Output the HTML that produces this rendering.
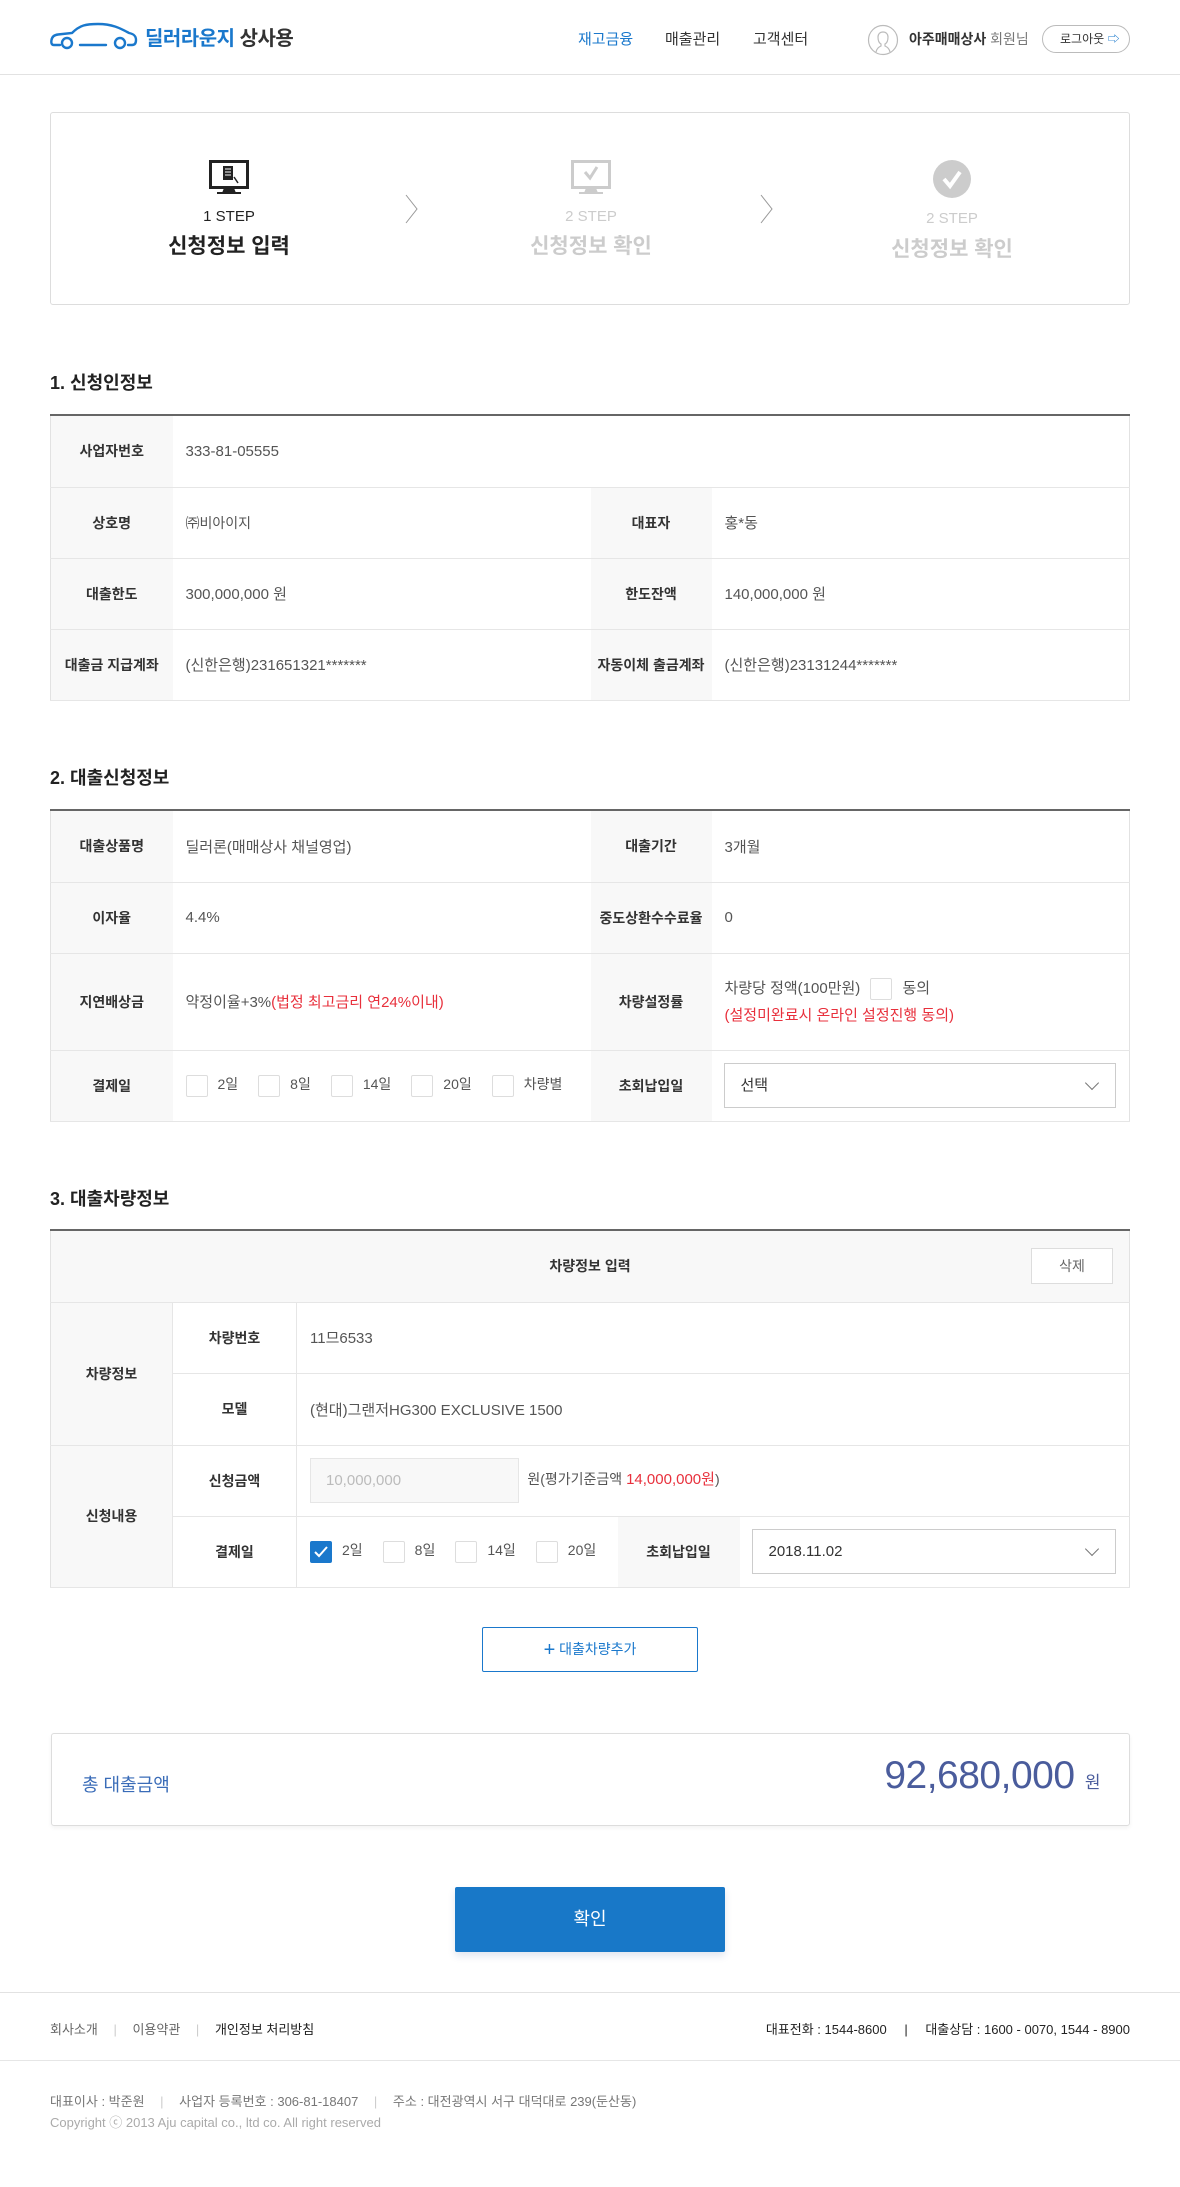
<!DOCTYPE html>
<html lang="ko"><head><meta charset="utf-8">
<style>
*{margin:0;padding:0;box-sizing:border-box}
body{width:1180px;height:2187px;background:#fff;font-family:"Liberation Sans","Noto Sans CJK KR",sans-serif;color:#333;position:relative;overflow:hidden}
.a{position:absolute}
.hdr{left:0;top:0;width:1180px;height:75px;border-bottom:1px solid #e2e2e2}
.nav{font-size:15px;color:#333;top:28px}
.box{border:1px solid #ddd;border-radius:3px}
.stitle{font-size:18px;font-weight:bold;color:#222;left:50px}
table{border-collapse:collapse;position:absolute;left:50px;width:1080px;border-top:2px solid #666}
td{border-bottom:1px solid #e6e6e6;font-size:15px;color:#555;padding-left:13px;vertical-align:middle}
td.l{background:#f8f8f8;font-weight:bold;color:#333;font-size:14px;text-align:center;padding:0}
table{border-left:1px solid #e2e2e2;border-right:1px solid #e2e2e2}
.red{color:#e8303c}
.cb{display:inline-block;width:22px;height:22px;border:1px solid #ddd;border-radius:2px;vertical-align:middle;margin-right:10px;background:#fff}
.ck{margin-right:20px;display:inline-block}
.sel{border:1px solid #ccc;height:45px;position:relative;font-size:15px;color:#333;line-height:43px;padding-left:16px}
.sel:after{content:"";position:absolute;right:18px;top:14px;width:9px;height:9px;border-right:1px solid #777;border-bottom:1px solid #777;transform:rotate(45deg)}
.ft{font-size:13px;color:#666}
</style></head><body>
<div class="a hdr"></div>
<svg class="a" style="left:50px;top:22px" width="88" height="28" viewBox="0 0 88 28"><g fill="none" stroke="#1a78cc" stroke-width="2.4" stroke-linecap="round"><path d="M10 23H4C1.5 23 1 21 1.5 18C2 15 4 13 8 12.5L22 11C30 3 36 2 48 2C62 2 70 6 79 11C84 12 86 14 86 18C86 21 85 23 82 23H78"/><circle cx="17" cy="21" r="5"/><circle cx="70" cy="21" r="5"/><path d="M30 23H56"/></g></svg>
<div class="a" style="left:145px;top:22px;font-size:20px;font-weight:bold;letter-spacing:-0.5px"><span style="color:#1a78cc">딜러라운지</span> <span style="color:#333">상사용</span></div>
<div class="a nav" style="left:578px;color:#1a78cc">재고금융</div>
<div class="a nav" style="left:665px">매출관리</div>
<div class="a nav" style="left:753px">고객센터</div>
<svg class="a" style="left:867px;top:24px" width="32" height="32" viewBox="0 0 32 32"><g fill="none" stroke="#bbb" stroke-width="1.2"><circle cx="16" cy="16" r="14.5"/><path d="M9 28c1-4 3-5 5-6v-2c-2-1-3-4-3-7 0-3 2-5 5-5s5 2 5 5c0 3-1 6-3 7v2c2 1 4 2 5 6"/></g></svg>
<div class="a" style="left:909px;top:29px;font-size:14px;color:#333;font-weight:bold">아주매매상사 <span style="font-weight:normal;color:#777">회원님</span></div>
<div class="a" style="left:1042px;top:25px;width:88px;height:28px;border:1px solid #bbb;border-radius:14px;font-size:12px;color:#333;line-height:26px;padding-left:17px">로그아웃 <span style="color:#1a78cc;font-size:12px">⇨</span></div>

<div class="a box" style="left:50px;top:112px;width:1080px;height:193px"></div>
<svg class="a" style="left:209px;top:160px" width="40" height="35" viewBox="0 0 40 35"><rect x="1.5" y="1.5" width="37" height="26" fill="#fff" stroke="#222" stroke-width="3"/><rect x="14" y="6" width="10" height="14" fill="#222"/><path d="M16 9h6M16 12h6M16 15h6" stroke="#fff"/><path d="M25 17l4 6" stroke="#222" stroke-width="1.5"/><path d="M15 28h10l2 5H13z" fill="#222"/><rect x="8" y="32" width="24" height="2" fill="#222"/></svg>
<div class="a" style="left:129px;top:208px;width:200px;text-align:center;font-size:15px;color:#222">1 STEP</div>
<div class="a" style="left:129px;top:230px;width:200px;text-align:center;font-size:21px;font-weight:bold;color:#222">신청정보 입력</div>
<svg class="a" style="left:404px;top:194px" width="16" height="30"><path d="M2 1l11 14L2 29" fill="none" stroke="#999" stroke-width="1"/></svg>
<svg class="a" style="left:759px;top:194px" width="16" height="30"><path d="M2 1l11 14L2 29" fill="none" stroke="#999" stroke-width="1"/></svg>
<svg class="a" style="left:571px;top:160px" width="40" height="35" viewBox="0 0 40 35"><rect x="1.5" y="1.5" width="37" height="26" fill="#fff" stroke="#ccc" stroke-width="3"/><path d="M14 12l5 6 7-11" fill="none" stroke="#ccc" stroke-width="3"/><path d="M15 28h10l2 5H13z" fill="#ccc"/><rect x="8" y="32" width="24" height="2" fill="#ccc"/></svg>
<div class="a" style="left:491px;top:208px;width:200px;text-align:center;font-size:15px;color:#ccc">2 STEP</div>
<div class="a" style="left:491px;top:230px;width:200px;text-align:center;font-size:21px;font-weight:bold;color:#ccc">신청정보 확인</div>
<svg class="a" style="left:932px;top:159px" width="40" height="40"><circle cx="20" cy="20" r="19" fill="#ccc"/><path d="M12 20l6 7 10-14" fill="none" stroke="#fff" stroke-width="4"/></svg>
<div class="a" style="left:852px;top:210px;width:200px;text-align:center;font-size:15px;color:#ccc">2 STEP</div>
<div class="a" style="left:852px;top:233px;width:200px;text-align:center;font-size:21px;font-weight:bold;color:#ccc">신청정보 확인</div>

<div class="a stitle" style="top:369px">1. 신청인정보</div>
<table style="top:414px">
<tr style="height:72px"><td class="l" style="width:122px">사업자번호</td><td colspan="3">333-81-05555</td></tr>
<tr style="height:71px"><td class="l">상호명</td><td style="width:418px;font-size:14px">㈜비아이지</td><td class="l" style="width:121px">대표자</td><td>홍*동</td></tr>
<tr style="height:71px"><td class="l">대출한도</td><td>300,000,000 원</td><td class="l">한도잔액</td><td>140,000,000 원</td></tr>
<tr style="height:71px"><td class="l">대출금 지급계좌</td><td>(신한은행)231651321*******</td><td class="l">자동이체 출금계좌</td><td>(신한은행)23131244*******</td></tr>
</table>

<div class="a stitle" style="top:764px">2. 대출신청정보</div>
<table style="top:809px">
<tr style="height:72px"><td class="l" style="width:122px">대출상품명</td><td style="width:418px">딜러론(매매상사 채널영업)</td><td class="l" style="width:121px">대출기간</td><td>3개월</td></tr>
<tr style="height:71px"><td class="l">이자율</td><td>4.4%</td><td class="l">중도상환수수료율</td><td>0</td></tr>
<tr style="height:97px"><td class="l">지연배상금</td><td>약정이율+3%<span class="red">(법정 최고금리 연24%이내)</span></td><td class="l">차량설정률</td><td style="line-height:27px">차량당 정액(100만원) <span class="cb" style="margin:0 10px 0 6px"></span>동의<br><span class="red">(설정미완료시 온라인 설정진행 동의)</span></td></tr>
<tr style="height:71px"><td class="l">결제일</td><td style="font-size:14px"><span class="ck"><span class="cb"></span>2일</span><span class="ck"><span class="cb"></span>8일</span><span class="ck"><span class="cb"></span>14일</span><span class="ck"><span class="cb"></span>20일</span><span class="ck" style="margin:0"><span class="cb"></span>차량별</span></td><td class="l">초회납입일</td><td style="padding-left:12px;padding-right:13px"><div class="sel">선택</div></td></tr>
</table>

<div class="a stitle" style="top:1185px">3. 대출차량정보</div>
<table style="top:1229px">
<tr style="height:72px;background:#f8f8f8"><td colspan="5" style="text-align:center;font-weight:bold;color:#333;font-size:14px;position:relative;padding:0">차량정보 입력<div class="a" style="right:16px;top:17px;width:82px;height:36px;background:#fff;border:1px solid #ddd;line-height:34px;font-weight:normal;color:#666">삭제</div></td></tr>
<tr style="height:71px"><td class="l" rowspan="2" style="width:122px;border-right:1px solid #e6e6e6">차량정보</td><td class="l" style="width:124px;background:#fff;border-right:1px solid #e6e6e6">차량번호</td><td colspan="3">11므6533</td></tr>
<tr style="height:72px"><td class="l" style="background:#fff;border-right:1px solid #e6e6e6">모델</td><td colspan="3">(현대)그랜저HG300 EXCLUSIVE  1500</td></tr>
<tr style="height:71px"><td class="l" rowspan="2" style="border-right:1px solid #e6e6e6">신청내용</td><td class="l" style="background:#fff;border-right:1px solid #e6e6e6">신청금액</td><td colspan="3"><span style="display:inline-block;width:209px;height:45px;background:#f8f8f8;border:1px solid #e6e6e6;color:#bbb;line-height:43px;padding-left:15px;vertical-align:middle">10,000,000</span> &nbsp;<span style="font-size:14px">원(평가기준금액 <span class="red" style="font-size:15px">14,000,000원</span>)</span></td></tr>
<tr style="height:71px"><td class="l" style="background:#fff;border-right:1px solid #e6e6e6">결제일</td><td style="width:321px;font-size:14px"><span class="ck"><span class="cb" style="background:#1a78cc;border-color:#1a78cc;position:relative"><svg style="position:absolute;left:3px;top:4px" width="14" height="12"><path d="M1 6l4 4 8-9" fill="none" stroke="#fff" stroke-width="2"/></svg></span>2일</span><span class="ck"><span class="cb"></span>8일</span><span class="ck"><span class="cb"></span>14일</span><span class="ck" style="margin:0"><span class="cb"></span>20일</span></td><td class="l" style="width:122px">초회납입일</td><td style="padding-left:12px;padding-right:13px"><div class="sel">2018.11.02</div></td></tr>
</table>

<div class="a" style="left:482px;top:1627px;width:216px;height:45px;border:1px solid #1a78cc;border-radius:2px;text-align:center;line-height:43px;font-size:14px;color:#1a78cc"><span style="font-size:20px;vertical-align:-2px">+</span> 대출차량추가</div>

<div class="a box" style="left:51px;top:1733px;width:1079px;height:93px;box-shadow:0 2px 4px rgba(0,0,0,.05)"></div>
<div class="a" style="left:82px;top:1771px;font-size:18px;color:#3a6cb8">총 대출금액</div>
<div class="a" style="right:80px;top:1754px;font-size:39px;color:#4a5c9c;letter-spacing:-0.5px">92,680,000 <span style="font-size:17px">원</span></div>

<div class="a" style="left:455px;top:1887px;width:270px;height:65px;background:#1878c8;border-radius:2px;color:#fff;font-size:18px;text-align:center;line-height:65px;box-shadow:0 4px 8px rgba(0,40,120,.12)">확인</div>

<div class="a" style="left:0;top:1992px;width:1180px;height:1px;background:#e2e2e2"></div>
<div class="a ft" style="left:50px;top:2019px">회사소개 <span style="color:#ccc;margin:0 12px">|</span> 이용약관 <span style="color:#ccc;margin:0 12px">|</span> <span style="color:#222">개인정보 처리방침</span></div>
<div class="a ft" style="right:50px;top:2019px;color:#222">대표전화 : 1544-8600 <span style="margin:0 14px">|</span> 대출상담 : 1600 - 0070, 1544 - 8900</div>
<div class="a" style="left:0;top:2060px;width:1180px;height:1px;background:#e6e6e6"></div>
<div class="a" style="left:50px;top:2091px;font-size:13px;color:#777">대표이사 : 박준원 <span style="color:#ccc;margin:0 12px">|</span> 사업자 등록번호 : 306-81-18407 <span style="color:#ccc;margin:0 12px">|</span> 주소 : 대전광역시 서구 대덕대로 239(둔산동)</div>
<div class="a" style="left:50px;top:2112px;font-size:13px;color:#aaa">Copyright ⓒ 2013 Aju capital co., ltd co. All right reserved</div>
</body></html>
